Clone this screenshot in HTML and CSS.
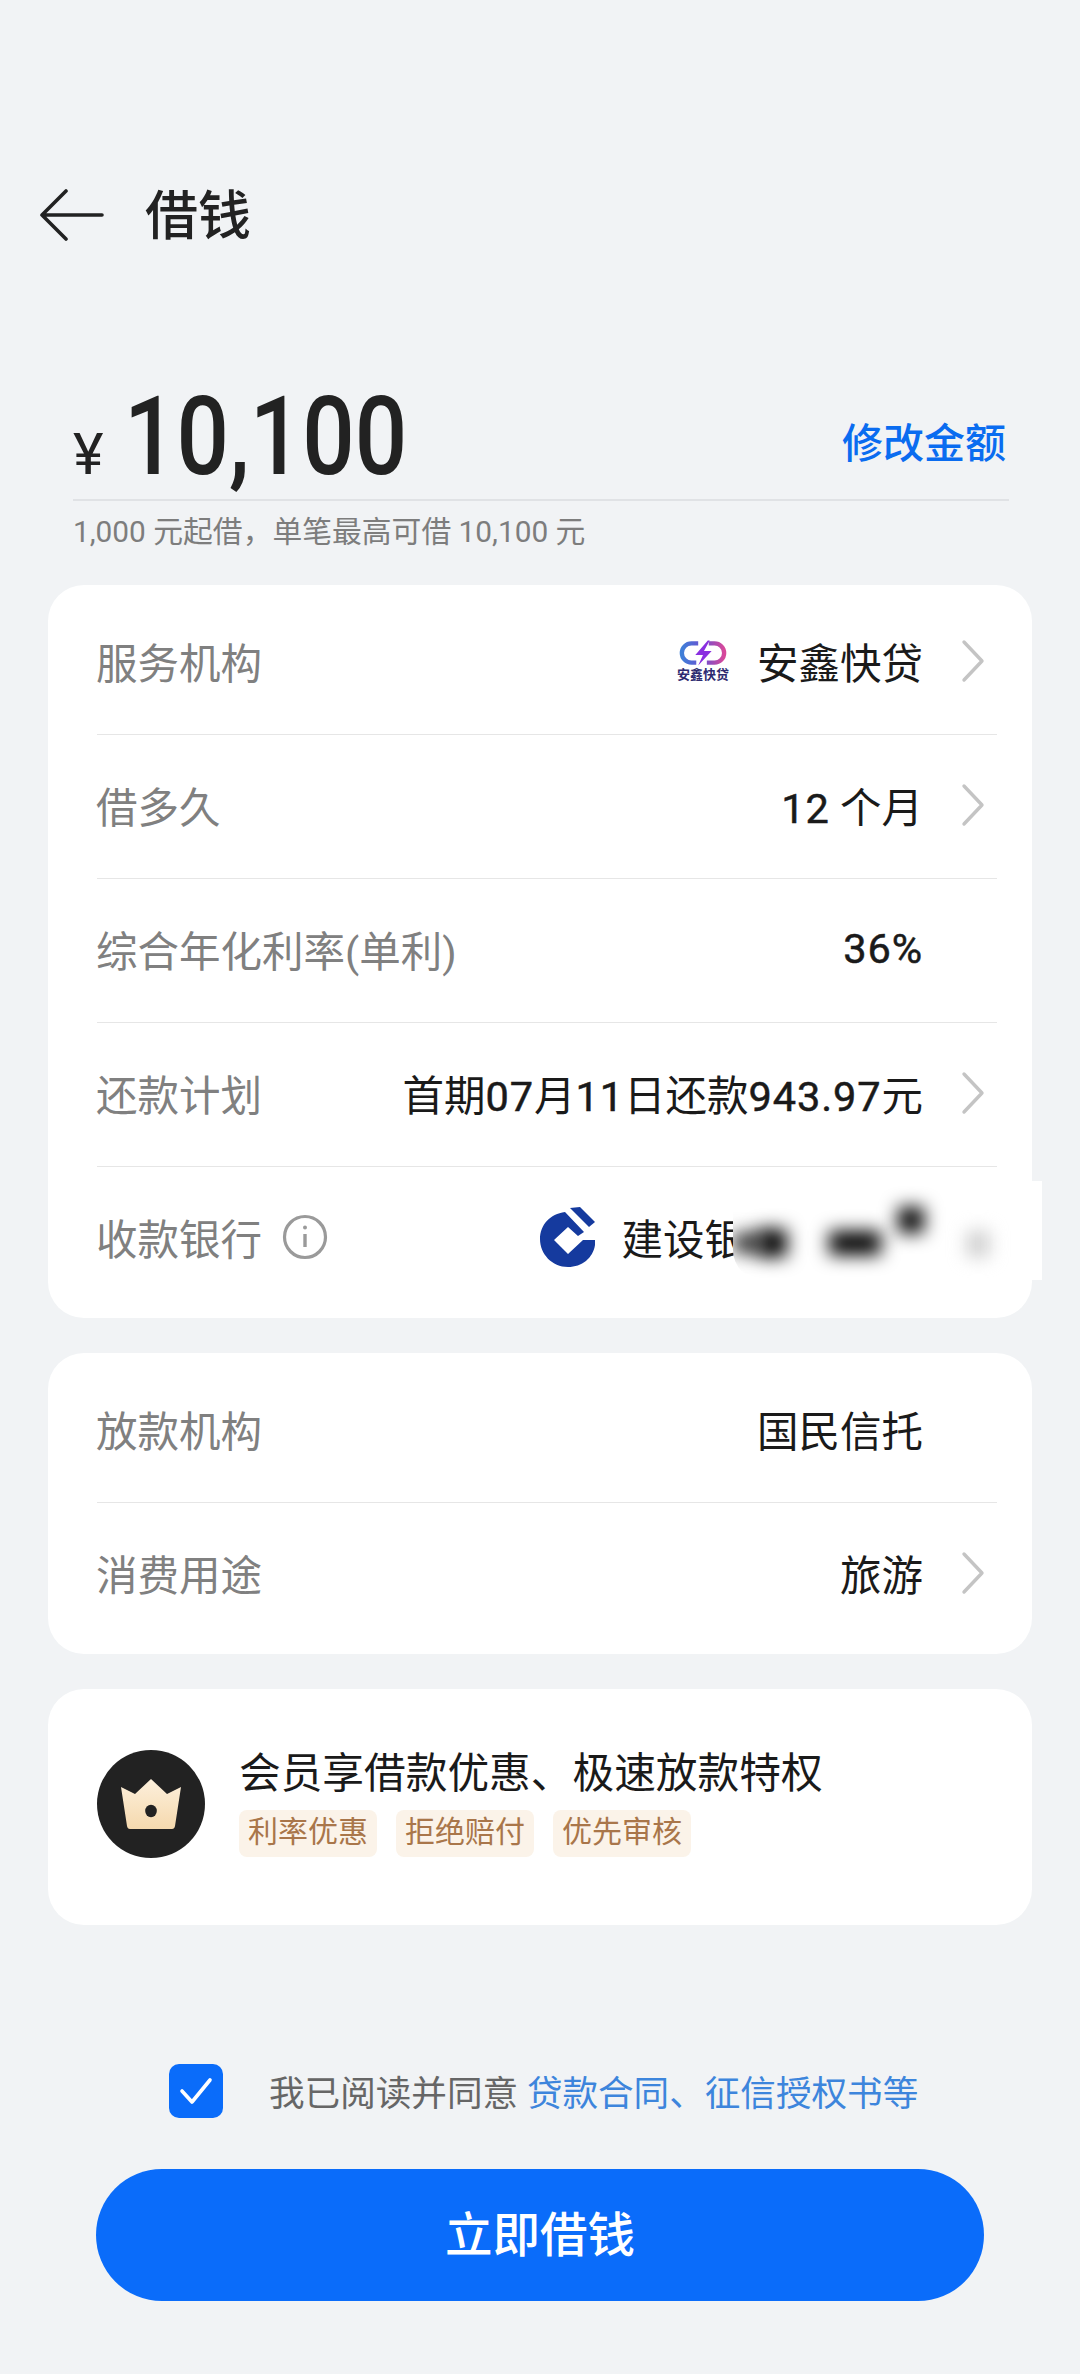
FILE: index.html
```html
<!DOCTYPE html>
<html lang="zh-CN">
<head>
    <meta charset="UTF-8">
    <meta name="viewport" content="width=device-width, initial-scale=1.0">
    <title>借钱</title>
    <link rel="stylesheet" href="styles.css">
</head>
<body>
    <header class="top-bar">
        <svg class="back-icon" viewBox="0 0 66 52" fill="none" stroke="#222" stroke-width="3.6" stroke-linecap="round" stroke-linejoin="round"><path d="M27 2 3 26l24 24M3 26h60"/></svg>
        <h1>借钱</h1>
    </header>

    <!-- Amount -->
    <section class="amount-section">
        <div class="amount-row">
            <span class="currency">¥</span>
            <span class="amount">10,100</span>
            <a class="edit-link">修改金额</a>
        </div>
        <p class="amount-hint">1,000 元起借，单笔最高可借 10,100 元</p>
    </section>

    <!-- Loan details -->
    <section class="card card-rows">
        <div class="row">
            <span class="label">服务机构</span>
            <span class="value with-logo">
                <span class="lender-logo">
                    <svg viewBox="0 0 52 26" fill="none">
                        <defs>
                            <linearGradient id="pillGrad" x1="0" x2="1" y1="0" y2="0">
                                <stop offset="0" stop-color="#3f7fd8"/>
                                <stop offset="0.5" stop-color="#6b4fd0"/>
                                <stop offset="1" stop-color="#d8489a"/>
                            </linearGradient>
                        </defs>
                        <path d="M21 3H14a10 10 0 0 0 0 20h5M32 3h6a10 10 0 0 1 0 20h-8" stroke="url(#pillGrad)" stroke-width="4.5"/>
                        <path d="M31 0 18 15h8l-5 11 14-15h-8l6-11z" fill="#8a2fe0"/>
                    </svg>
                    <span class="lender-logo-text">安鑫快贷</span>
                </span>
                安鑫快贷
            </span>
            <svg class="chevron" viewBox="0 0 24 44" fill="none" stroke="#c4c4c4" stroke-width="3.4" stroke-linecap="round" stroke-linejoin="round"><path d="M3 3l18 19L3 41"/></svg>
        </div>
        <div class="row">
            <span class="label">借多久</span>
            <span class="value"><span class="num">12</span> 个月</span>
            <svg class="chevron" viewBox="0 0 24 44" fill="none" stroke="#c4c4c4" stroke-width="3.4" stroke-linecap="round" stroke-linejoin="round"><path d="M3 3l18 19L3 41"/></svg>
        </div>
        <div class="row plain">
            <span class="label">综合年化利率(单利)</span>
            <span class="value"><span class="num">36%</span></span>
        </div>
        <div class="row">
            <span class="label">还款计划</span>
            <span class="value">首期<span class="num">07</span>月<span class="num">11</span>日还款<span class="num">943.97</span>元</span>
            <svg class="chevron" viewBox="0 0 24 44" fill="none" stroke="#c4c4c4" stroke-width="3.4" stroke-linecap="round" stroke-linejoin="round"><path d="M3 3l18 19L3 41"/></svg>
        </div>
        <div class="row bank-row">
            <span class="label">收款银行</span>
            <svg class="info-icon" viewBox="0 0 46 46" fill="none" stroke="#9a9a9a" stroke-width="3.2"><circle cx="23" cy="23" r="20.5"/><path d="M23 20v13" stroke-width="3.4"/><circle cx="23" cy="13.5" r="2" fill="#9a9a9a" stroke="none"/></svg>
            <span class="value bank-value">
                <svg class="bank-logo" viewBox="0 0 55 60" fill="#153a9e">
                    <path d="M25 5 44 25 38 29 28 20 14 33 28 47 43 33H55V38C53 51 42 60 28 60 12 60 0 47 0 32 0 18 10 7 25 5Z"/>
                    <path d="M30 1 40 0 55 15 49 20Z"/>
                </svg>
                建设银
            </span>
            <!-- masked card number -->
            <div class="mask">
                <i class="blob blob-a"></i>
                <i class="blob blob-b"></i>
                <i class="blob blob-c"></i>
                <i class="blob blob-d"></i>
                <i class="blob blob-e"></i>
            </div>
        </div>
    </section>

    <section class="card card-rows">
        <div class="row plain">
            <span class="label">放款机构</span>
            <span class="value">国民信托</span>
        </div>
        <div class="row">
            <span class="label">消费用途</span>
            <span class="value">旅游</span>
            <svg class="chevron" viewBox="0 0 24 44" fill="none" stroke="#c4c4c4" stroke-width="3.4" stroke-linecap="round" stroke-linejoin="round"><path d="M3 3l18 19L3 41"/></svg>
        </div>
    </section>

    <!-- Member banner -->
    <section class="card member-card">
        <div class="member-badge">
            <svg viewBox="0 0 60 50">
                <defs>
                    <linearGradient id="crownGrad" x1="0" x2="0" y1="0" y2="1">
                        <stop offset="0" stop-color="#fdf0dc"/>
                        <stop offset="1" stop-color="#f5d9ae"/>
                    </linearGradient>
                </defs>
                <path d="M0 8 L14 15 L30 0 L46 15 L60 8 L54 47 Q53.5 50 51 50 L9 50 Q6.5 50 6 47 Z" fill="url(#crownGrad)"/>
                <ellipse cx="30" cy="32" rx="5.8" ry="6.2" fill="#222"/>
            </svg>
        </div>
        <div class="member-info">
            <div class="member-title">会员享借款优惠、极速放款特权</div>
            <div class="member-tags">
                <span class="tag">利率优惠</span>
                <span class="tag">拒绝赔付</span>
                <span class="tag">优先审核</span>
            </div>
        </div>
    </section>

    <!-- Agreement -->
    <div class="agreement">
        <span class="checkbox">
            <svg viewBox="0 0 34 28" fill="none" stroke="#fff" stroke-width="3.6" stroke-linecap="round" stroke-linejoin="round"><path d="M3 14l10 11L31 3"/></svg>
        </span>
        <span class="agreement-text">我已阅读并同意 <a>贷款合同、征信授权书等</a></span>
    </div>

    <button class="submit-btn">立即借钱</button>
</body>
</html>
```

FILE: styles.css
```css
* {
    box-sizing: border-box;
}

body {
    width: 1080px;
    height: 2374px;
    margin: 0;
    overflow: hidden;
    background-color: #f1f3f5;
    color: #1a1a1a;
    font-family: Roboto, "Noto Sans CJK SC", sans-serif;
}

.top-bar {
    display: flex;
    align-items: center;
    height: 80px;
    margin-top: 175px;
    padding-left: 39px;
}

.back-icon {
    width: 66px;
    height: 52px;
}

.top-bar h1 {
    margin: 0 0 6px 40px;
    font-size: 53px;
    font-weight: 500;
    color: #222;
}

.amount-section {
    margin: 126px 71px 33px 73px;
}

.amount-row {
    display: flex;
    align-items: baseline;
    height: 120px;
    padding-top: 6px;
    border-bottom: 2px solid #e0e2e5;
}

.currency {
    font-size: 58px;
    font-weight: 400;
    color: #222;
}

.amount {
    margin-left: 21px;
    font-size: 110px;
    font-weight: 500;
    line-height: 100px;
    color: #222;
    transform: scaleX(0.84);
    transform-origin: left;
}

.edit-link {
    align-self: center;
    margin-left: auto;
    margin-right: 3px;
    margin-bottom: 6px;
    font-size: 41px;
    font-weight: 500;
    color: #0a6cf0;
}

.amount-hint {
    margin: 11px 0 0;
    font-size: 29.8px;
    line-height: 40px;
    color: #7d7d7d;
}

.card {
    margin: 0 48px 35px;
    background-color: #fff;
    border-radius: 36px;
}

.card-rows {
    padding: 6px 35px 7px 49px;
}

.row {
    position: relative;
    display: flex;
    align-items: center;
    height: 144px;
    padding-right: 12px;
    padding-bottom: 4px;
    border-bottom: 1px solid #e6e6e6;
}

.row:last-child {
    border-bottom: none;
}

.row.plain {
    padding-right: 74px;
}

.label {
    margin-left: -1px;
    font-size: 41.5px;
    color: #808080;
}

.value {
    margin-left: auto;
    font-size: 41.5px;
    color: #1a1a1a;
}

.num {
    letter-spacing: 0.9px;
    -webkit-text-stroke: 0.5px #1a1a1a;
}

.with-logo,
.bank-value {
    display: flex;
    align-items: center;
}

.chevron {
    flex-shrink: 0;
    width: 24px;
    height: 44px;
    margin-left: 38px;
}

.lender-logo {
    display: flex;
    flex-direction: column;
    align-items: center;
    width: 54px;
    margin-right: 27px;
}

.lender-logo svg {
    width: 50px;
    height: 26px;
}

.lender-logo-text {
    margin-top: 2px;
    font-size: 13px;
    font-weight: 700;
    line-height: 14px;
    color: #2d2a70;
    white-space: nowrap;
}

.info-icon {
    width: 46px;
    height: 46px;
    margin-left: 20px;
}

.bank-value {
    margin-right: 239px;
}

.bank-logo {
    width: 55px;
    height: 60px;
    margin-right: 26px;
}

/* blurred part of the bank name */
.mask {
    position: absolute;
    left: 636px;
    top: 14px;
    width: 309px;
    height: 99px;
    background-color: #fff;
    border-bottom-left-radius: 30px;
    overflow: hidden;
}

.blob {
    position: absolute;
    display: block;
    background-color: #000;
    filter: blur(9px);
}

.blob-a {
    left: 0;
    top: 52px;
    width: 32px;
    height: 20px;
    background-color: #333;
}

.blob-b {
    left: 26px;
    top: 48px;
    width: 28px;
    height: 28px;
}

.blob-c {
    left: 96px;
    top: 50px;
    width: 52px;
    height: 24px;
}

.blob-d {
    left: 165px;
    top: 26px;
    width: 26px;
    height: 26px;
}

.blob-e {
    left: 234px;
    top: 50px;
    width: 22px;
    height: 26px;
    background-color: #ccc;
}

.member-card {
    display: flex;
    align-items: center;
    height: 236px;
    padding: 0 0 6px 49px;
    margin-bottom: 0;
}

.member-badge {
    display: flex;
    align-items: center;
    justify-content: center;
    flex-shrink: 0;
    width: 108px;
    height: 108px;
    border-radius: 50%;
    background-color: #222;
}

.member-badge svg {
    width: 60px;
    height: 50px;
}

.member-info {
    margin-left: 34px;
}

.member-title {
    font-size: 41.7px;
    line-height: 50px;
    padding-bottom: 2px;
    margin-top: -3px;
    color: #1a1a1a;
}

.member-tags {
    display: flex;
    gap: 19px;
    margin-top: 9px;
}

.tag {
    width: 138px;
    height: 47px;
    border-radius: 8px;
    background-color: #fbf3e9;
    font-size: 30px;
    line-height: 43px;
    text-align: center;
    color: #a9764a;
}

.agreement {
    display: flex;
    align-items: center;
    height: 54px;
    margin: 139px 0 0 169px;
}

.checkbox {
    display: flex;
    align-items: center;
    justify-content: center;
    width: 54px;
    height: 54px;
    border-radius: 10px;
    background-color: #0a6cfa;
}

.checkbox svg {
    width: 34px;
    height: 28px;
}

.agreement-text {
    margin-left: 46px;
    margin-bottom: 2px;
    font-size: 35.6px;
    color: #666;
}

.agreement-text a {
    color: #3d85dc;
}

.submit-btn {
    display: block;
    width: 888px;
    height: 132px;
    margin: 51px 96px 0;
    padding-bottom: 9px;
    border: none;
    border-radius: 66px;
    background-color: #0a6cfa;
    color: #fff;
    font-family: inherit;
    font-size: 47.5px;
    font-weight: 500;
}
```
